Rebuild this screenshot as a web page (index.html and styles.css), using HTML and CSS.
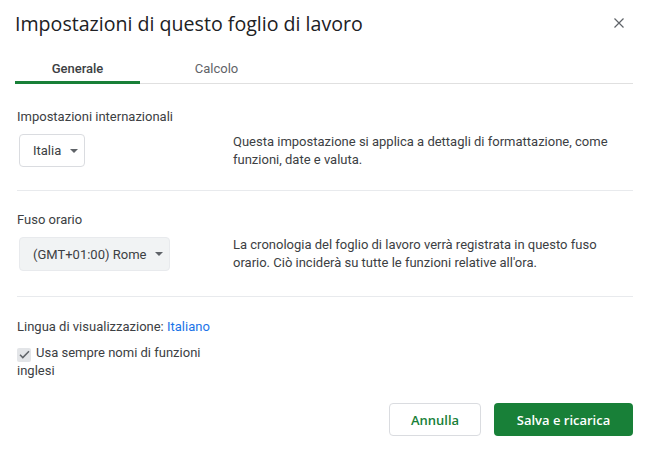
FILE: index.html
```html
<!DOCTYPE html>
<html lang="it">
<head>
<meta charset="utf-8">
<link rel="stylesheet" href="styles.css">
</head>
<body>
<div class="dialog">
  <div class="header">
    <h1 class="title">Impostazioni di questo foglio di lavoro</h1>
    <button class="close" aria-label="Chiudi">
      <svg width="10" height="10" viewBox="0 0 10 10"><path d="M0.5 0.5L9.5 9.5M9.5 0.5L0.5 9.5" stroke="#5f6368" stroke-width="1.2" fill="none"/></svg>
    </button>
  </div>
  <div class="tabs">
    <div class="tab active">Generale</div>
    <div class="tab">Calcolo</div>
  </div>
  <div class="section">
    <div class="left">
      <div class="label">Impostazioni internazionali</div>
      <div class="select white">Italia <span class="caret"></span></div>
    </div>
    <div class="desc">Questa impostazione si applica a dettagli di formattazione, come funzioni, date e valuta.</div>
  </div>
  <div class="section">
    <div class="left">
      <div class="label">Fuso orario</div>
      <div class="select grey">(GMT+01:00) Rome <span class="caret"></span></div>
    </div>
    <div class="desc">La cronologia del foglio di lavoro verrà registrata in questo fuso orario. Ciò inciderà su tutte le funzioni relative all'ora.</div>
  </div>
  <div class="lang">
    <div class="lang-line">Lingua di visualizzazione: <a class="link">Italiano</a></div>
    <div class="check-line"><span class="check"><svg width="11" height="9" viewBox="0 0 11 9"><path d="M1 4.8L3.8 7.6L10 1.2" stroke="#5f6368" stroke-width="1.5" fill="none"/></svg></span>Usa sempre nomi di funzioni inglesi</div>
  </div>
  <div class="actions">
    <button class="btn cancel">Annulla</button>
    <button class="btn primary">Salva e ricarica</button>
  </div>
</div>
</body>
</html>
```
FILE: styles.css
```css
* { box-sizing: border-box; }
html, body { margin: 0; padding: 0; background: #fff; }
body { font-family: Roboto, "Liberation Sans", sans-serif; color: #3c4043; }
.dialog { width: 650px; height: 449px; padding: 0 17px 0 15px; }
.header { display: flex; justify-content: space-between; align-items: center; height: 44px; padding-top: 2px; }
.title { margin: 0; font-family: "Open Sans", Roboto, sans-serif; font-weight: 400; font-size: 19.6px; color: #202124; }
.close { border: 0; background: none; padding: 0; margin-right: 9px; margin-top: 0; display: flex; }
.tabs { display: flex; margin-top: 10px; border-bottom: 1px solid #e0e0e0; height: 30px; }
.tab { width: 125px; text-align: center; font-size: 13px; color: #5f6368; padding-top: 7px; }
.tab.active { color: #3c4043; font-weight: 500; border-bottom: 3px solid #188038; margin-bottom: -1px; }
.tab + .tab { width: 153px; }
.section { display: flex; margin-left: 2px; border-bottom: 1px solid #e8eaed; padding: 25px 0 21px; }
.section + .section { padding-top: 21px; padding-bottom: 24px; }
.left { width: 216px; }
.label { font-size: 13px; color: #3c4043; line-height: 16px; margin-bottom: 9px; }
.select { display: inline-flex; align-items: center; height: 33px; margin-left: 2px; font-size: 13px; color: #3c4043; border-radius: 4px; padding: 0 6px 0 13px; }
.select.white { border: 1px solid #dadce0; background: #fff; }
.select.grey { background: #f1f3f4; border: 1px solid #e8eaed; height: 34px; }
.caret { width: 0; height: 0; border-left: 4px solid transparent; border-right: 4px solid transparent; border-top: 4px solid #5f6368; margin-left: 9px; }
.desc { font-size: 13px; line-height: 18px; color: #3c4043; margin-top: 24px; width: 395px; }
.lang { margin-left: 2px; padding-top: 21px; font-size: 13px; width: 200px; }
.lang-line { line-height: 18px; }
.link { color: #1a73e8; }
.check-line { margin-top: 8px; line-height: 18px; }
.check { display: inline-flex; align-items: center; justify-content: center; width: 14px; height: 14px; background: #e3e5e8; border-radius: 2px; vertical-align: -2px; margin-right: 5px; }
.actions { display: flex; justify-content: flex-end; gap: 13px; margin-top: 23px; }
.btn { font-family: "Open Sans", Roboto, sans-serif; font-size: 13px; font-weight: 600; height: 33px; border-radius: 4px; cursor: pointer; }
.cancel { width: 92px; background: #fff; border: 1px solid #dadce0; color: #188038; }
.primary { width: 139px; background: #188038; border: 0; color: #fff; }
```
